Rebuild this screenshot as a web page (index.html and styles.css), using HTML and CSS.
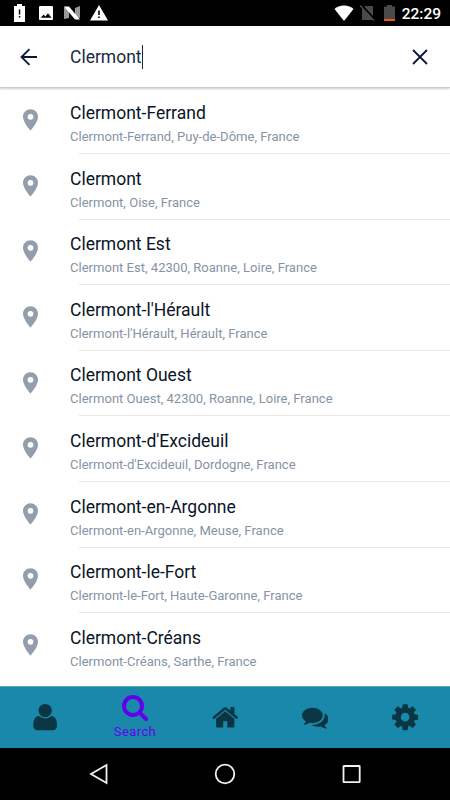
FILE: index.html
```
<!DOCTYPE html>
<html lang="en">
<head>
    <meta charset="UTF-8">
    <meta name="viewport" content="width=device-width, initial-scale=1.0">
    <title>Search</title>
    <link rel="stylesheet" href="styles.css">
</head>
<body>
    <svg class="defs" width="0" height="0">
        <symbol id="pin" viewBox="5 2 14 20">
            <path d="M12 2C8.130 2 5 5.130 5 9c0 5.250 7 13 7 13s7-7.750 7-13c0-3.870-3.130-7-7-7zm0 9.700a2.700 2.700 0 1 1 0-5.400 2.700 2.700 0 0 1 0 5.400z"/>
        </symbol>
    </svg>

    <!-- Status bar -->
    <div class="status-bar">
        <div class="status-left">
            <svg width="11" height="18" viewBox="0 0 11 18"><path fill="#fff" d="M3 0h5v2h3v16H0V2h3z"/><path fill="#000" d="M4.800 5.500h1.500v5H4.800zM4.800 12h1.500v1.500H4.800z"/></svg>
            <svg width="14" height="14" viewBox="0 0 14 14"><rect width="14" height="14" rx="1" fill="#fff"/><path fill="#000" d="M2 11.800l2.500-3.200 2 2 2.500-3.400 3.500 4.600z"/></svg>
            <svg width="16" height="14" viewBox="0 0 16 14"><path fill="#999" d="M0 1l5 2v9l-5 1zM16 0l-5 2v9l5 1z"/><path fill="#fff" d="M0 .5h5L16 13.500h-5z"/></svg>
            <svg width="18" height="16" viewBox="0 0 18 16"><path fill="#fff" d="M9 0l9 15.500H0z"/><path fill="#000" d="M8.200 5.500h1.600v4.500H8.200zM8.200 11.500h1.600v1.500H8.200z"/></svg>
        </div>
        <div class="status-right">
            <svg width="20" height="16" viewBox="0 0 20 16"><path fill="#fff" d="M10 16L.500 4Q4 .500 10 .500t9.500 3.500z"/></svg>
            <svg width="15" height="16" viewBox="0 0 15 16"><path fill="#4a4a4a" d="M5 1h8v14H2V4z"/><path stroke="#000" stroke-width="2.500" d="M1 0l14 15"/><path stroke="#4a4a4a" stroke-width="1.400" d="M0 .5l14 15"/></svg>
            <svg width="11" height="16" viewBox="0 0 11 16"><path fill="#4a4a4a" d="M3 0h5v1.500h3V14H0V1.500h3z"/><path fill="#f4511e" d="M0 14h11v2H0z"/></svg>
            <span class="clock">22:29</span>
        </div>
    </div>

    <!-- Search field -->
    <div class="header">
        <svg class="back" width="18" height="18" viewBox="0 0 18 18"><path d="M17 9H2M9.500 1.200L1.500 9l8 7.800"/></svg>
        <div class="query">Clermont<span class="cursor"></span></div>
        <svg class="clear" width="16" height="16" viewBox="0 0 16 16"><path d="M1 1l14 14M15 1L1 15"/></svg>
    </div>

    <!-- Results -->
    <div class="results">
        <div class="item">
            <svg class="pin"><use href="#pin"/></svg>
            <div class="text"><div class="name">Clermont-Ferrand</div><div class="place">Clermont-Ferrand, Puy-de-Dôme, France</div></div>
        </div>
        <div class="item">
            <svg class="pin"><use href="#pin"/></svg>
            <div class="text"><div class="name">Clermont</div><div class="place">Clermont, Oise, France</div></div>
        </div>
        <div class="item">
            <svg class="pin"><use href="#pin"/></svg>
            <div class="text"><div class="name">Clermont Est</div><div class="place">Clermont Est, 42300, Roanne, Loire, France</div></div>
        </div>
        <div class="item">
            <svg class="pin"><use href="#pin"/></svg>
            <div class="text"><div class="name">Clermont-l'Hérault</div><div class="place">Clermont-l'Hérault, Hérault, France</div></div>
        </div>
        <div class="item">
            <svg class="pin"><use href="#pin"/></svg>
            <div class="text"><div class="name">Clermont Ouest</div><div class="place">Clermont Ouest, 42300, Roanne, Loire, France</div></div>
        </div>
        <div class="item">
            <svg class="pin"><use href="#pin"/></svg>
            <div class="text"><div class="name">Clermont-d'Excideuil</div><div class="place">Clermont-d'Excideuil, Dordogne, France</div></div>
        </div>
        <div class="item">
            <svg class="pin"><use href="#pin"/></svg>
            <div class="text"><div class="name">Clermont-en-Argonne</div><div class="place">Clermont-en-Argonne, Meuse, France</div></div>
        </div>
        <div class="item">
            <svg class="pin"><use href="#pin"/></svg>
            <div class="text"><div class="name">Clermont-le-Fort</div><div class="place">Clermont-le-Fort, Haute-Garonne, France</div></div>
        </div>
        <div class="item">
            <svg class="pin"><use href="#pin"/></svg>
            <div class="text"><div class="name">Clermont-Créans</div><div class="place">Clermont-Créans, Sarthe, France</div></div>
        </div>
    </div>

    <!-- Tabs -->
    <div class="tabs">
        <div class="tab user">
            <svg viewBox="0 0 1792 1792"><path d="M1600 1399q0 109-62.500 187t-150.500 78h-982q-88 0-150.500-78t-62.500-187q0-85 8.500-160.500t31.500-152 58.500-131 94-89 134.500-34.500q158 128 377 128t377-128q76 0 134.500 34.500t94 89 58.500 131 31.500 152 8.500 160.500z"/><circle class="head" cx="896" cy="506" r="430"/></svg>
        </div>
        <div class="tab active">
            <svg viewBox="0 0 1792 1792"><path d="M1216 832q0-185-131.500-316.500t-316.500-131.500-316.500 131.500-131.500 316.500 131.500 316.500 316.500 131.500 316.500-131.500 131.500-316.500zm512 832q0 52-38 90t-90 38q-54 0-90-38l-343-342q-179 124-399 124-143 0-273.500-55.500t-225-150-150-225-55.500-273.500 55.500-273.500 150-225 225-150 273.500-55.500 273.500 55.500 225 150 150 225 55.500 273.500q0 220-124 399l343 343q37 37 37 90z"/></svg>
            <span class="label">Search</span>
        </div>
        <div class="tab home">
            <svg viewBox="0 0 1792 1792"><path d="M1472 992v480q0 26-19 45t-45 19h-384v-384h-256v384h-384q-26 0-45-19t-19-45v-480q0-1 .5-3t.5-3l575-474 575 474q1 2 1 6zm223-69l-62 74q-8 9-21 11h-3q-13 0-21-7l-692-577-692 577q-12 8-24 7-13-2-21-11l-62-74q-8-10-7-23.500t11-21.500l719-599q32-26 76-26t76 26l244 204v-195q0-14 9-23t23-9h192q14 0 23 9t9 23v408l219 182q10 8 11 21.500t-7 23.500z"/></svg>
        </div>
        <div class="tab comments">
            <svg viewBox="0 0 1792 1792"><path d="M1408 768q0 139-94 257t-256.500 186.500-353.500 68.500q-86 0-176-16-124 88-278 128-36 9-86 16h-3q-11 0-20.500-8t-11.500-21q-1-3-1-6.500t.5-6.500 2-6l2.500-5 3.500-5.500 4-5 4.500-5 4-4.500q5-6 23-25t26-29.500 22.500-29 25-38.500 20.500-44q-124-72-195-177t-71-224q0-139 94-257t256.500-186.500 353.500-68.500 353.500 68.500 256.500 186.500 94 257zm384 256q0 120-71 224.500t-195 176.500q10 24 20.500 44t25 38.500 22.500 29 26 29.500 23 25q1 1 4 4.500t4.500 5 4 5 3.500 5.500l2.500 5 2 6 .5 6.500-1 6.500q-3 14-13 22t-22 7q-50-7-86-16-154-40-278-128-90 16-176 16-271 0-472-132 58 4 88 4 161 0 309-45t264-129q125-92 192-212t67-254q0-77-23-152 129 71 204 178t75 230z"/></svg>
        </div>
        <div class="tab">
            <svg viewBox="0 0 1792 1792"><path d="M1152 896q0-106-75-181t-181-75-181 75-75 181 75 181 181 75 181-75 75-181zm512-109v222q0 12-8 23t-20 13l-185 28q-19 54-39 91 35 50 107 138 10 12 10 25t-9 23q-27 37-99 108t-94 71q-12 0-26-9l-138-108q-44 23-91 38-16 136-29 186-7 28-36 28h-222q-14 0-24.500-8.500t-11.500-21.500l-28-184q-49-16-90-37l-141 107q-10 9-25 9-14 0-25-11-126-114-165-168-7-10-7-23 0-12 8-23 15-21 51-66.500t54-70.500q-27-50-41-99l-183-27q-13-2-21-12.500t-8-23.500v-222q0-12 8-23t19-13l186-28q14-46 39-92-40-57-107-138-10-12-10-24 0-10 9-23 26-36 98.500-107.500t94.500-71.500q13 0 26 10l138 107q44-23 91-38 16-136 29-186 7-28 36-28h222q14 0 24.500 8.500t11.500 21.500l28 184q49 16 90 37l142-107q9-9 24-9 13 0 25 10 129 119 165 170 7 8 7 22 0 12-8 23-15 21-51 66.500t-54 70.500q26 50 41 98l183 28q13 2 21 12.500t8 23.500z"/></svg>
        </div>
    </div>

    <!-- System navigation -->
    <div class="nav-bar">
        <svg width="20" height="22" viewBox="0 0 20 22"><path d="M17.500 2v18L2 11z"/></svg>
        <svg width="22" height="22" viewBox="0 0 22 22"><circle cx="11" cy="11" r="9.300"/></svg>
        <svg width="20" height="20" viewBox="0 0 20 20"><rect x="2.500" y="2" width="16.200" height="16.200" rx=".5"/></svg>
    </div>
</body>
</html>
```

FILE: styles.css
```
* {
    box-sizing: border-box;
}

body {
    margin: 0;
    width: 450px;
    height: 800px;
    display: flex;
    flex-direction: column;
    font-family: Roboto, sans-serif;
    background-color: #fff;
    overflow: hidden;
}

svg {
    display: block;
    flex: none;
}

.defs {
    position: absolute;
}

.status-bar {
    height: 26px;
    flex: none;
    padding: 0 9px 0 14px;
    display: flex;
    justify-content: space-between;
    align-items: center;
    background-color: #000;
    color: #fff;
}

.status-left,
.status-right {
    display: flex;
    align-items: center;
}

.status-left {
    gap: 14px;
}

.status-left svg:nth-child(3) {
    margin-left: -3px;
}

.status-left svg:nth-child(4) {
    margin-left: -4px;
}

.status-right svg:nth-child(2) {
    margin-left: 6px;
}

.status-right svg:nth-child(3) {
    margin: 0 7px 0 9px;
}

.clock {
    font-size: 15.500px;
    font-weight: 500;
    line-height: 26px;
    padding-top: 2px;
}

.header {
    height: 62px;
    flex: none;
    padding: 0 22.500px 0 20px;
    display: flex;
    align-items: center;
    border-bottom: 1px solid #cbcbcb;
    box-shadow: 0 1px 2px rgba(0, 0, 0, 0.2);
}

.header path {
    fill: none;
    stroke: #0a1738;
    stroke-width: 1.800;
}

.query {
    flex: 1;
    margin-left: 32px;
    padding-top: 1px;
    display: flex;
    align-items: center;
    font-size: 17.500px;
    color: #1b2a44;
}

.cursor {
    width: 1px;
    height: 24px;
    background-color: #1b2a44;
}

.results {
    height: 598px;
    flex: none;
    padding-top: 0.500px;
    overflow: hidden;
}

.item {
    height: 65.600px;
    padding-left: 23px;
    display: flex;
    align-items: flex-start;
    background: linear-gradient(#e8e8e8, #e8e8e8) no-repeat 79px 100% / 100% 1px;
}

.item:last-child {
    background: none;
}

.pin {
    width: 15px;
    height: 22px;
    margin-top: 20.700px;
    fill: #929eab;
}

.text {
    margin-left: 32px;
    padding-top: 13.500px;
}

.name {
    font-size: 17.500px;
    line-height: 22px;
    color: #0a1428;
}

.place {
    margin-top: 4px;
    font-size: 13.060px;
    line-height: 18px;
    color: #8593a5;
}

.tabs {
    height: 62px;
    flex: none;
    display: flex;
    background-color: #1a88aa;
    border-top: 1px solid #5fa9bf;
}

.tab {
    flex: 1;
    display: flex;
    flex-direction: column;
    align-items: center;
    justify-content: center;
    fill: #0a3644;
}

.tab svg {
    width: 30.300px;
    height: 30.300px;
}

.head {
    stroke: #1a88aa;
    stroke-width: 70;
}

.home svg {
    width: 28.500px;
    height: 28.500px;
}

.comments svg {
    width: 26.500px;
    height: 26.500px;
}

.active {
    justify-content: flex-start;
    padding-top: 6px;
    fill: #6200ee;
    color: #6200ee;
}

.active svg {
    width: 28px;
    height: 28px;
}

.label {
    margin-top: 3px;
    font-size: 13px;
    line-height: 16px;
    letter-spacing: 0.4px;
}

.nav-bar {
    height: 52px;
    flex: none;
    padding: 0 89px;
    display: flex;
    justify-content: space-between;
    align-items: center;
    background-color: #000;
}

.nav-bar svg {
    fill: none;
    stroke: #f2f2f2;
    stroke-width: 1.800;
}
```
